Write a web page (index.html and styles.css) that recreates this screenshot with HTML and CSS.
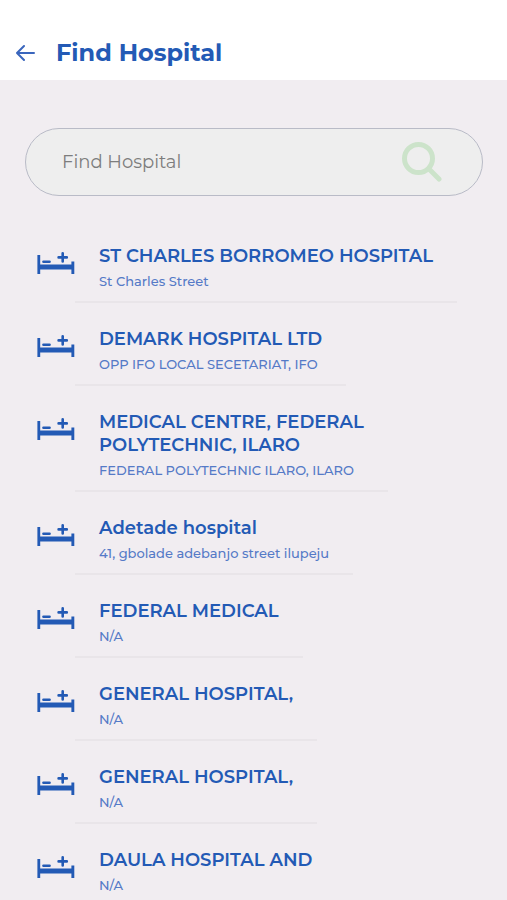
FILE: index.html
```html
<!DOCTYPE html>
<html lang="en">
<head>
<meta charset="utf-8">
<meta name="viewport" content="width=device-width, initial-scale=1">
<title>Find Hospital</title>
<link rel="stylesheet" href="styles.css">
</head>
<body>
<svg class="sprite" aria-hidden="true">
  <symbol id="bed" viewBox="0 0 38 24">
    <path d="M.4 3h2.8v9.4h31.2V9.4h2.9v12.6h-2.9v-4.4H3.2v4.4H.4z"/>
    <rect x="5.2" y="8.4" width="8.6" height="2.6" rx="1.2"/>
    <path d="M25.7 1.3v8.2M21.6 5.4h8.2" fill="none" stroke="currentColor" stroke-width="2.6" stroke-linecap="round"/>
  </symbol>
</svg>
<div class="app">
  <header class="header">
    <button class="back" type="button" aria-label="Back">
      <svg viewBox="0 0 20 18"><path d="M8 2 1 9l7 7M1 9h17"/></svg>
    </button>
    <h1 class="heading">Find Hospital</h1>
  </header>
  <main class="content">
    <form class="search" role="search">
      <input class="search-input" type="text" placeholder="Find Hospital" aria-label="Find Hospital">
      <button class="search-button" type="button" aria-label="Search">
        <svg viewBox="0 0 40 40"><circle cx="16.5" cy="16.5" r="14"/><path d="m27 27 10 10"/></svg>
      </button>
    </form>
    <ul class="list">
      <li class="item"><svg class="bed"><use href="#bed"/></svg><div class="info"><h2 class="name">ST CHARLES BORROMEO HOSPITAL</h2><p class="address">St Charles Street</p></div></li>
      <li class="item"><svg class="bed"><use href="#bed"/></svg><div class="info"><h2 class="name">DEMARK HOSPITAL LTD</h2><p class="address">OPP IFO LOCAL SECETARIAT, IFO</p></div></li>
      <li class="item"><svg class="bed"><use href="#bed"/></svg><div class="info"><h2 class="name">MEDICAL CENTRE, FEDERAL<br>POLYTECHNIC, ILARO</h2><p class="address">FEDERAL POLYTECHNIC ILARO, ILARO</p></div></li>
      <li class="item"><svg class="bed"><use href="#bed"/></svg><div class="info"><h2 class="name">Adetade hospital</h2><p class="address">41, gbolade adebanjo street ilupeju</p></div></li>
      <li class="item"><svg class="bed"><use href="#bed"/></svg><div class="info"><h2 class="name">FEDERAL MEDICAL</h2><p class="address">N/A</p></div></li>
      <li class="item"><svg class="bed"><use href="#bed"/></svg><div class="info"><h2 class="name">GENERAL HOSPITAL,</h2><p class="address">N/A</p></div></li>
      <li class="item"><svg class="bed"><use href="#bed"/></svg><div class="info"><h2 class="name">GENERAL HOSPITAL,</h2><p class="address">N/A</p></div></li>
      <li class="item"><svg class="bed"><use href="#bed"/></svg><div class="info"><h2 class="name">DAULA HOSPITAL AND</h2><p class="address">N/A</p></div></li>
    </ul>
  </main>
</div>
</body>
</html>
```
FILE: styles.css
```css
* { box-sizing: border-box; }

body {
  margin: 0;
  background: #f1edf1;
  color: #235ab5;
  font-family: Montserrat, Inter, sans-serif;
}

h1, h2, p, ul { margin: 0; padding: 0; }

button { padding: 0; border: 0; background: none; }

.sprite { display: none; }

.app {
  display: flex;
  flex-direction: column;
  height: 100vh;
}

.header {
  display: flex;
  align-items: center;
  gap: 20px;
  padding: 37px 16px 11px;
  background: #fff;
}

.back { width: 20px; height: 18px; }

.back svg {
  display: block;
  fill: none;
  stroke: #3a66bd;
  stroke-width: 2;
  stroke-linecap: round;
  stroke-linejoin: round;
}

.heading { font-size: 24px; line-height: 32px; font-weight: 700; }

.content {
  flex: 1;
  min-height: 0;
  padding-top: 48px;
  overflow-y: auto;
  scrollbar-width: none;
}

.search {
  display: flex;
  align-items: center;
  height: 68px;
  margin: 0 24px 24px 25px;
  padding: 0 40px 0 36px;
  border: 1px solid #b9bbc7;
  border-radius: 34px;
  background: #eee;
}

.search-input {
  flex: 1;
  min-width: 0;
  padding: 0;
  border: 0;
  outline: 0;
  background: transparent;
  color: #666;
  font: 400 18px/24px Montserrat, Inter, sans-serif;
}

.search-input::placeholder { color: #7d7d7d; opacity: 1; }

.search-button { width: 40px; height: 40px; }

.search-button svg {
  display: block;
  fill: none;
  stroke: #cce3ca;
  stroke-width: 5;
  stroke-linecap: round;
}

.list { padding: 0 16px 0 37px; list-style: none; }

.item { display: flex; align-items: flex-start; }

.bed {
  flex: none;
  width: 38px;
  height: 24px;
  margin-top: 32px;
  fill: currentColor;
}

.info {
  padding: 25px 24px 10px;
  border-bottom: 2px solid #e9e5e9;
}

.name { font-size: 18px; line-height: 23px; font-weight: 600; }

.address {
  margin-top: 3px;
  color: #557ac7;
  font-size: 13px;
  line-height: 20px;
  font-weight: 500;
}
```
